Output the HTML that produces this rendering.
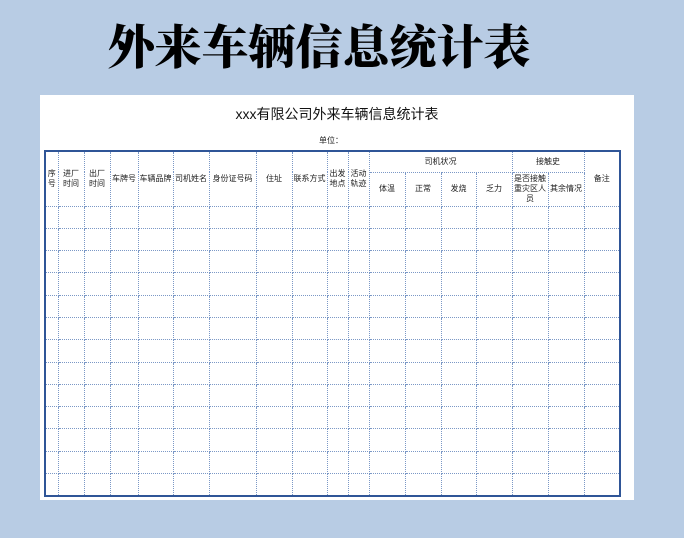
<!DOCTYPE html>
<html><head><meta charset="utf-8"><style>
body{margin:0;width:684px;height:538px;background:#b8cce4;position:relative;overflow:hidden;font-family:"Liberation Sans","Noto Sans CJK SC",sans-serif;}
.title{position:absolute;left:100px;top:19px;width:438px;text-align:center;font-family:"Liberation Serif","Noto Serif CJK SC",serif;font-weight:900;font-size:47px;line-height:60px;color:#000;white-space:nowrap}
.panel{position:absolute;left:40px;top:95px;width:594px;height:405px;background:#fff}
.sub{position:absolute;left:0;width:594px;top:9px;text-align:center;font-size:14px;color:#111}
.unit{position:absolute;left:279px;top:40px;font-size:8px;color:#222}
table{position:absolute;left:4px;top:55px;border-collapse:collapse;table-layout:fixed;border:2px solid #2f5597}
td{border:1px dotted #7b98c6;padding:0;font-size:8px;line-height:10px;text-align:center;color:#222;overflow:hidden;white-space:nowrap}
tr.b td{height:21.3px}
</style></head><body>
<div class="title">外来车辆信息统计表</div>
<div class="panel">
<div class="sub">xxx有限公司外来车辆信息统计表</div>
<div class="unit">单位：</div>
<table>
<colgroup><col style="width:13px"><col style="width:26px"><col style="width:26px"><col style="width:28px"><col style="width:35px"><col style="width:36px"><col style="width:47px"><col style="width:36px"><col style="width:35px"><col style="width:21px"><col style="width:21px"><col style="width:36px"><col style="width:36px"><col style="width:35px"><col style="width:36px"><col style="width:36px"><col style="width:36px"><col style="width:36px"></colgroup>
<tr style="height:21px"><td rowspan="2">序<br>号</td><td rowspan="2">进厂<br>时间</td><td rowspan="2">出厂<br>时间</td><td rowspan="2">车牌号</td><td rowspan="2">车辆品牌</td><td rowspan="2">司机姓名</td><td rowspan="2">身份证号码</td><td rowspan="2">住址</td><td rowspan="2">联系方式</td><td rowspan="2">出发<br>地点</td><td rowspan="2">活动<br>轨迹</td><td colspan="4">司机状况</td><td colspan="2">接触史</td><td rowspan="2">备注</td></tr>
<tr style="height:33px"><td style="height:33px">体温</td><td>正常</td><td>发烧</td><td>乏力</td><td>是否接触<br>重灾区人<br>员</td><td>其余情况</td></tr>
<tr class="b"><td></td><td></td><td></td><td></td><td></td><td></td><td></td><td></td><td></td><td></td><td></td><td></td><td></td><td></td><td></td><td></td><td></td><td></td></tr>
<tr class="b"><td></td><td></td><td></td><td></td><td></td><td></td><td></td><td></td><td></td><td></td><td></td><td></td><td></td><td></td><td></td><td></td><td></td><td></td></tr>
<tr class="b"><td></td><td></td><td></td><td></td><td></td><td></td><td></td><td></td><td></td><td></td><td></td><td></td><td></td><td></td><td></td><td></td><td></td><td></td></tr>
<tr class="b"><td></td><td></td><td></td><td></td><td></td><td></td><td></td><td></td><td></td><td></td><td></td><td></td><td></td><td></td><td></td><td></td><td></td><td></td></tr>
<tr class="b"><td></td><td></td><td></td><td></td><td></td><td></td><td></td><td></td><td></td><td></td><td></td><td></td><td></td><td></td><td></td><td></td><td></td><td></td></tr>
<tr class="b"><td></td><td></td><td></td><td></td><td></td><td></td><td></td><td></td><td></td><td></td><td></td><td></td><td></td><td></td><td></td><td></td><td></td><td></td></tr>
<tr class="b"><td></td><td></td><td></td><td></td><td></td><td></td><td></td><td></td><td></td><td></td><td></td><td></td><td></td><td></td><td></td><td></td><td></td><td></td></tr>
<tr class="b"><td></td><td></td><td></td><td></td><td></td><td></td><td></td><td></td><td></td><td></td><td></td><td></td><td></td><td></td><td></td><td></td><td></td><td></td></tr>
<tr class="b"><td></td><td></td><td></td><td></td><td></td><td></td><td></td><td></td><td></td><td></td><td></td><td></td><td></td><td></td><td></td><td></td><td></td><td></td></tr>
<tr class="b"><td></td><td></td><td></td><td></td><td></td><td></td><td></td><td></td><td></td><td></td><td></td><td></td><td></td><td></td><td></td><td></td><td></td><td></td></tr>
<tr class="b"><td></td><td></td><td></td><td></td><td></td><td></td><td></td><td></td><td></td><td></td><td></td><td></td><td></td><td></td><td></td><td></td><td></td><td></td></tr>
<tr class="b"><td></td><td></td><td></td><td></td><td></td><td></td><td></td><td></td><td></td><td></td><td></td><td></td><td></td><td></td><td></td><td></td><td></td><td></td></tr>
<tr class="b"><td></td><td></td><td></td><td></td><td></td><td></td><td></td><td></td><td></td><td></td><td></td><td></td><td></td><td></td><td></td><td></td><td></td><td></td></tr>
</table>
</div>
</body></html>
